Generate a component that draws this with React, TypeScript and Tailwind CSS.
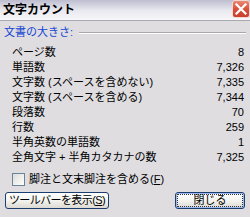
const rows: { label: string; value: string }[] = [
  { label: "ページ数", value: "8" },
  { label: "単語数", value: "7,326" },
  { label: "文字数 (スペースを含めない)", value: "7,335" },
  { label: "文字数 (スペースを含める)", value: "7,344" },
  { label: "段落数", value: "70" },
  { label: "行数", value: "259" },
  { label: "半角英数の単語数", value: "1" },
  { label: "全角文字 + 半角カタカナの数", value: "7,325" },
];

function CloseButton() {
  return (
    <div className="flex h-[18px] w-[18px] items-center justify-center rounded-[3px] border border-[#f4d6d0] bg-linear-to-b from-[#e98a74] via-[#d9503a] to-[#c8402c]">
      <svg width="12" height="12" viewBox="0 0 12 12">
        <path d="M1.5 1.5 L10.5 10.5 M10.5 1.5 L1.5 10.5" stroke="white" strokeWidth="2.2" strokeLinecap="square" />
      </svg>
    </div>
  );
}

export default function App() {
  return (
    <div className="flex h-[217px] w-[250px] flex-col overflow-hidden bg-[#dfdde0] font-['Liberation_Sans','Noto_Sans_CJK_JP',sans-serif] text-[11px] text-black">
      {/* title bar */}
      <div className="flex h-[21px] items-start justify-between border-b border-[#a9a9b3] bg-linear-to-b from-[#bdbdd0] via-[#e7e7ee] to-[#f8f8fb]">
        <span className="pl-[3px] pt-[3px] text-[12px] font-bold leading-[14px]">文字カウント</span>
        <CloseButton />
      </div>

      {/* group header */}
      <div className="mt-[4px] flex h-[15px] items-center pl-[4px] pr-[4px]">
        <span className="leading-[15px] text-[#1446d4]">文書の大きさ:</span>
        <div className="ml-[6px] flex-1 border-t border-b border-t-[#a9a7a9] border-b-white" />
      </div>

      {/* stats */}
      <div className="mt-[5px] flex flex-col pl-[12px] pr-[6px]">
        {rows.map((r) => (
          <div key={r.label} className="flex h-[15px] items-center justify-between leading-[15px]">
            <span>{r.label}</span>
            <span>{r.value}</span>
          </div>
        ))}
      </div>

      {/* checkbox */}
      <div className="mt-[7px] flex h-[14px] items-center pl-[12px]">
        <div className="h-[13px] w-[13px] border border-[#6a849f] bg-linear-to-br from-[#dcdcd6] to-white" />
        <span className="ml-[4px] leading-[14px]">
          脚注と文末脚注を含める(<span className="underline">F</span>)
        </span>
      </div>

      {/* buttons */}
      <div className="mt-[6px] flex items-start justify-between pl-[5px] pr-[5px]">
        <button className="flex h-[17px] w-[104px] items-center justify-center whitespace-nowrap rounded-[3px] border border-[#1c3d6e] bg-linear-to-b from-white via-[#f4f3ef] to-[#dcd9d2] text-[11px] leading-[15px] tracking-[-0.6px]">
          ツールバーを表示(<span className="underline">S</span>)
        </button>
        <button className="flex h-[17px] w-[70px] items-center justify-center rounded-[3px] border border-[#1c3d6e] bg-linear-to-b from-white via-[#f4f3ef] to-[#dcd9d2] p-[1px] shadow-[inset_0_0_0_1px_#9dbaf2]">
          <span className="flex h-full w-full items-center justify-center border border-dotted border-[#333] leading-[13px]">
            閉じる
          </span>
        </button>
      </div>
    </div>
  );
}
